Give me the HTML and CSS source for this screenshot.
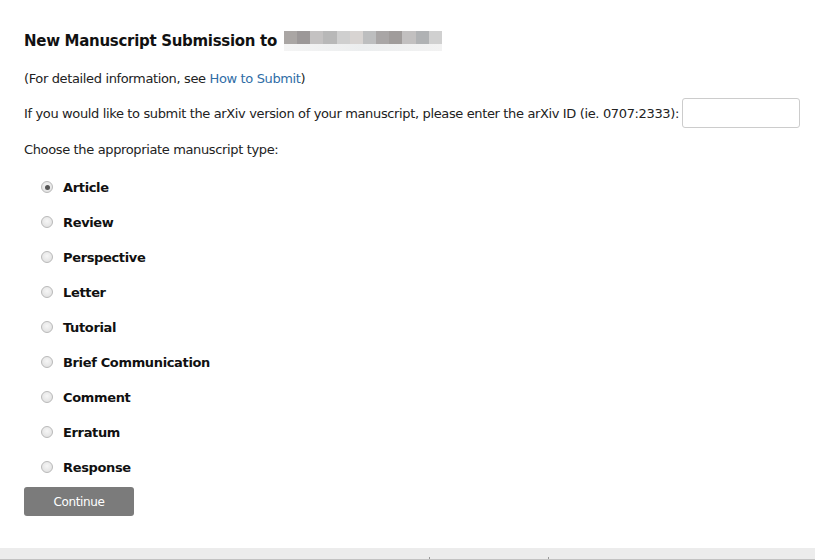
FILE: index.html
```html
<!DOCTYPE html>
<html>
<head>
<meta charset="utf-8">
<link rel="stylesheet" href="styles.css">
</head>
<body>
<div class="page">
  <h1 class="title">New Manuscript Submission to <span class="blur"><span class="blur-top"><i class="b1"></i><i class="b2"></i><i class="b3"></i><i class="b4"></i><i class="b5"></i><i class="b6"></i><i class="b7"></i><i class="b8"></i><i class="b9"></i><i class="b10"></i><i class="b11"></i><i class="b12"></i></span><span class="blur-bot"></span></span></h1>
  <p class="line info">(For detailed information, see <a href="#" class="link">How to Submit</a>)</p>
  <div class="line arxiv">
    <span>If you would like to submit the arXiv version of your manuscript, please enter the arXiv ID (ie. 0707:2333):</span>
    <input type="text" class="arxiv-input">
  </div>
  <p class="line choose">Choose the appropriate manuscript type:</p>
  <ul class="types">
    <li class="type"><span class="radio checked"></span><span class="label">Article</span></li>
    <li class="type"><span class="radio"></span><span class="label">Review</span></li>
    <li class="type"><span class="radio"></span><span class="label">Perspective</span></li>
    <li class="type"><span class="radio"></span><span class="label">Letter</span></li>
    <li class="type"><span class="radio"></span><span class="label">Tutorial</span></li>
    <li class="type"><span class="radio"></span><span class="label">Brief Communication</span></li>
    <li class="type"><span class="radio"></span><span class="label">Comment</span></li>
    <li class="type"><span class="radio"></span><span class="label">Erratum</span></li>
    <li class="type"><span class="radio"></span><span class="label">Response</span></li>
  </ul>
  <button class="continue">Continue</button>
</div>
<div class="footer"><span class="tick t1"></span><span class="tick t2"></span></div>
</body>
</html>
```
FILE: styles.css
```css
html, body { margin: 0; padding: 0; background: #fff; }
body {
  font-family: "DejaVu Sans", Verdana, sans-serif;
  color: #222;
  width: 815px;
  height: 560px;
  overflow: hidden;
  display: flex;
  flex-direction: column;
}
.page {
  padding: 29px 0 0 24px;
  height: 520px;
  box-sizing: border-box;
}
.title {
  margin: 0;
  font-size: 15px;
  font-weight: bold;
  color: #111;
  height: 24px;
  display: flex;
  align-items: center;
  white-space: pre;
  letter-spacing: -0.3px;
}
.blur {
  display: inline-flex;
  flex-direction: column;
  width: 158px;
  height: 20px;
  margin-left: 2px;
}
.blur-top { display: flex; height: 13px; }
.blur-top i { flex: 1; display: block; }
.b1 { background: #aaa6a4; } .b2 { background: #9c9898; } .b3 { background: #c4c2c2; }
.b4 { background: #b8b8b8; } .b5 { background: #cfcfcf; } .b6 { background: #d8d4d2; }
.b7 { background: #bdbebf; } .b8 { background: #a9a6a6; } .b9 { background: #a09c9b; }
.b10 { background: #c2c0c0; } .b11 { background: #b0b2b4; } .b12 { background: #d0d0d0; }
.blur-bot { height: 7px; background: linear-gradient(90deg, #f4f4f4, #eceeef 50%, #f2f2f2); }
.line {
  margin: 0;
  font-size: 13px;
  letter-spacing: -0.36px;
  color: #222;
}
.info { margin-top: 17px; height: 18px; line-height: 18px; }
.link { color: #2f6da6; text-decoration: none; }
.arxiv {
  margin-top: 10px;
  display: flex;
  align-items: center;
  gap: 3px;
  height: 30px;
}
.arxiv-input {
  width: 118px;
  height: 30px;
  box-sizing: border-box;
  border: 1px solid #cccccc;
  border-radius: 3px;
  margin: 0;
  padding: 0 6px;
}
.choose { margin-top: 13px; height: 18px; line-height: 18px; }
.types {
  list-style: none;
  margin: 19px 0 0 0;
  padding: 0 0 0 17px;
  display: flex;
  flex-direction: column;
  gap: 17px;
}
.type {
  display: flex;
  align-items: center;
  height: 18px;
  gap: 10px;
}
.radio {
  width: 12px;
  height: 12px;
  box-sizing: border-box;
  border-radius: 50%;
  border: 1px solid #b9b9b9;
  background: radial-gradient(circle at 50% 40%, #f6f6f6, #dcdcdc);
  display: flex;
  align-items: center;
  justify-content: center;
}
.radio.checked::after {
  content: "";
  width: 5px;
  height: 5px;
  border-radius: 50%;
  background: #555;
}
.label {
  font-size: 13px;
  font-weight: bold;
  color: #111;
  letter-spacing: -0.35px;
}
.continue {
  margin-top: 11px;
  width: 110px;
  height: 29px;
  border: none;
  border-radius: 3px;
  background: #7b7b7b;
  color: #fff;
  font-family: "DejaVu Sans", Verdana, sans-serif;
  font-size: 12px;
  letter-spacing: -0.4px;
  padding: 0;
}
.footer {
  margin-top: 29px;
  height: 11px;
  background: #ececec;
  border-bottom: 1px solid #c2c2c2;
  position: relative;
}
.tick { position: absolute; bottom: 0; width: 1px; height: 2px; background: #999; }
.t1 { left: 429px; }
.t2 { left: 548px; }
```
